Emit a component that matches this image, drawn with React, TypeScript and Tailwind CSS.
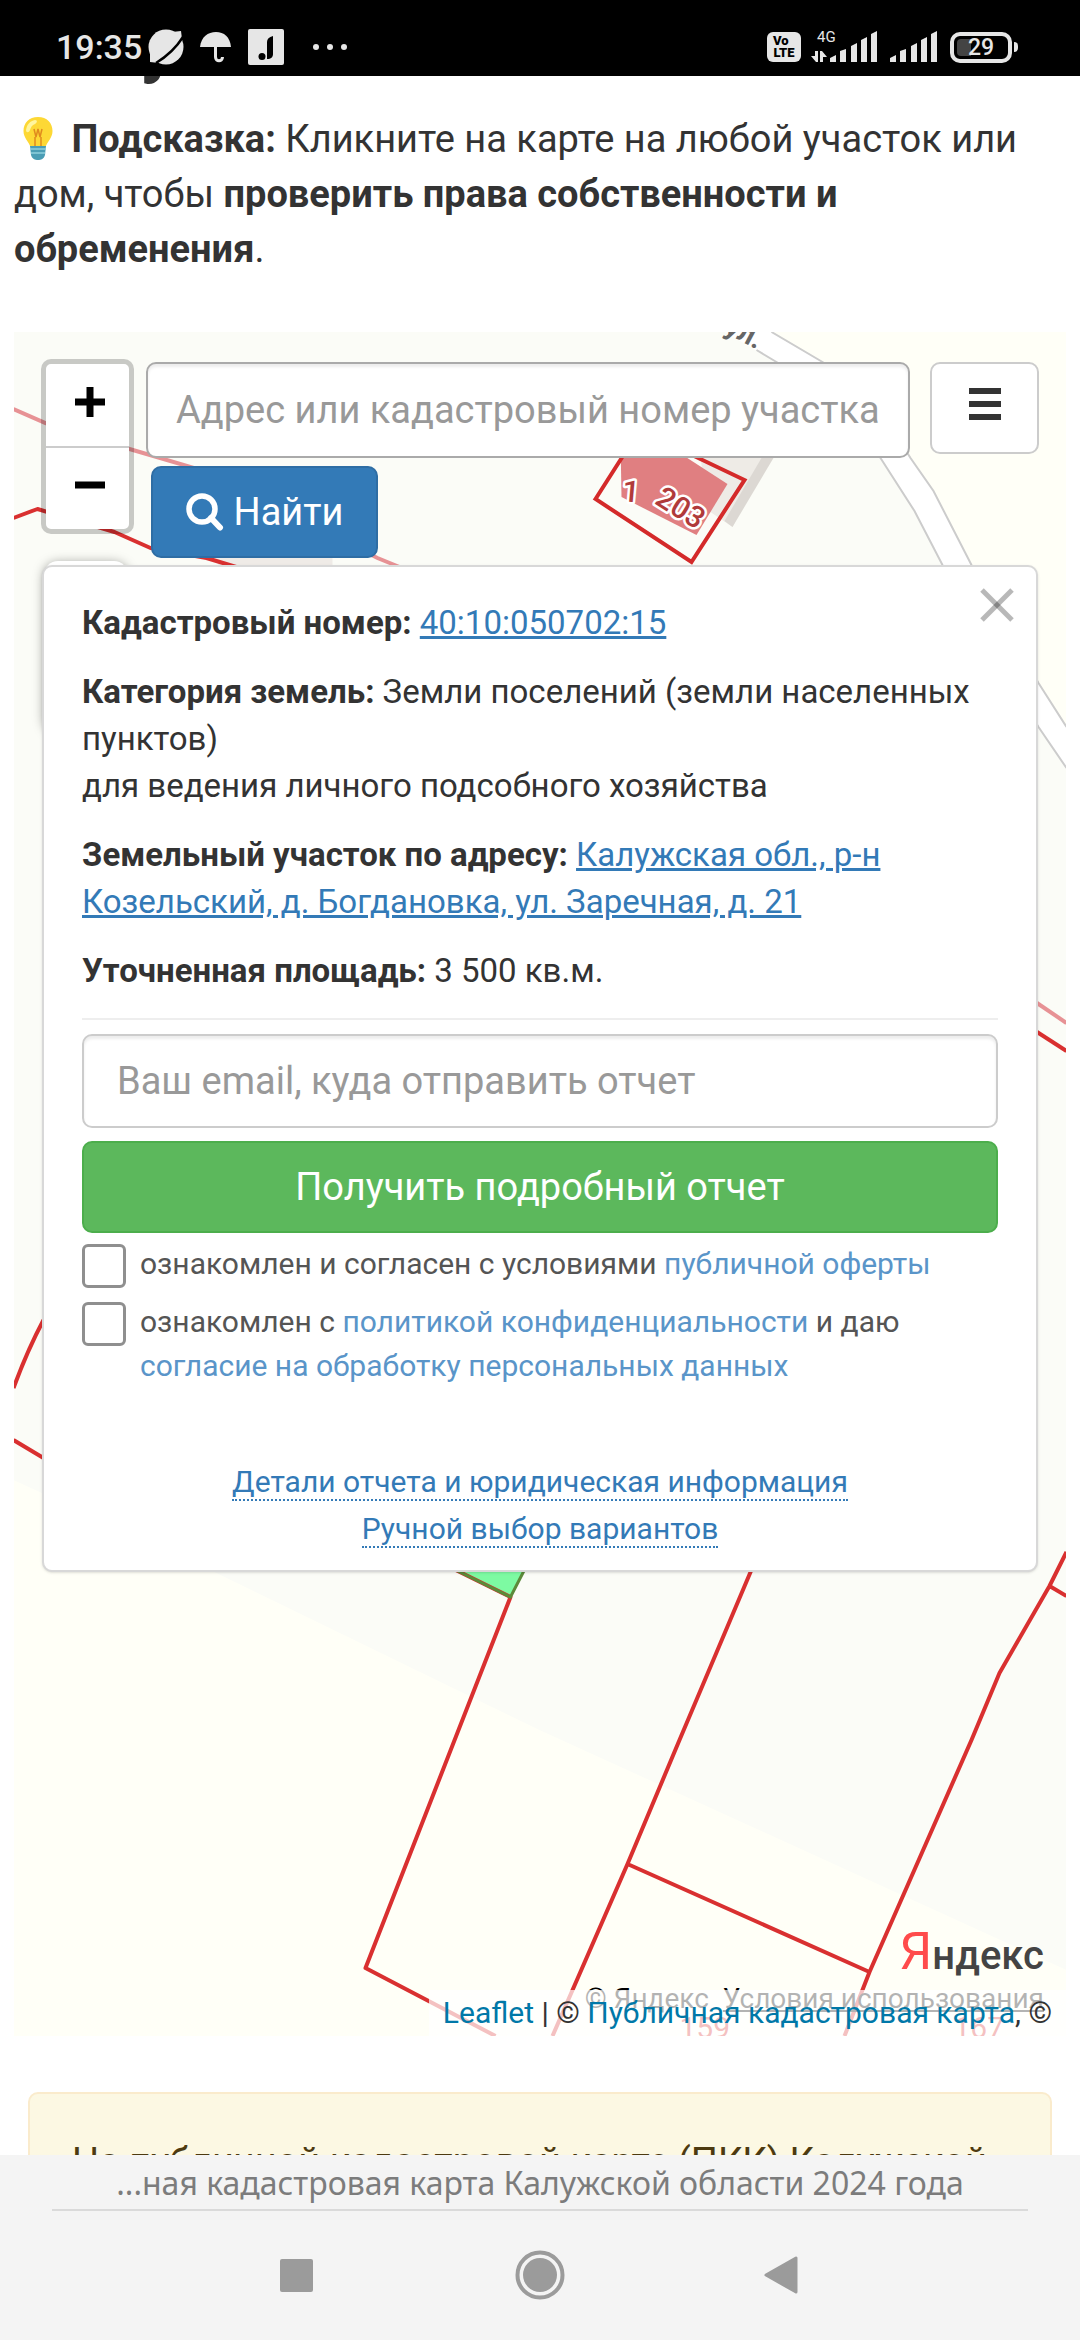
import { useState } from "react";

function StatusBar() {
  return (
    <header className="relative z-10 flex h-[76px] shrink-0 items-center justify-between bg-black pt-[18px] pr-[62px] pl-14 text-[#e6e6e6]">
      <div className="flex items-center">
        <span className="text-[34px] leading-[42px] font-medium">19:35</span>
        <svg className="ml-1.5 h-9 w-9" viewBox="0 0 36 36" fill="currentColor">
          <circle cx="18" cy="18" r="17.500" />
          <path d="M24 3 33 2 34 10ZM2 24v9l9 1Z" />
          <path d="M8 34C18 28 28 19 35 8" fill="none" stroke="#000" strokeWidth="2.500" />
        </svg>
        <svg className="ml-4 h-8 w-8" viewBox="0 0 32 32" fill="currentColor">
          <path d="M0 16C1 6 8 1 16 1s14 5 15 15Z" />
          <path d="M15.500 15v11c0 5 7 5 7 0" fill="none" stroke="currentColor" strokeWidth="3" />
        </svg>
        <svg className="ml-4 h-9 w-9" viewBox="0 0 36 36">
          <rect width="36" height="36" rx="2" fill="currentColor" />
          <circle cx="14" cy="27.500" r="3.500" fill="#000" />
          <path d="M19 30V13c0-3 2-5 6-6v18c0 3-2 5-6 5Z" fill="#000" />
        </svg>
        <svg className="ml-7 h-2 w-9" viewBox="0 0 36 8" fill="currentColor">
          <circle cx="4" cy="4" r="3" />
          <circle cx="18" cy="4" r="3" />
          <circle cx="32" cy="4" r="3" />
        </svg>
      </div>

      <div className="flex items-center">
        <span className="flex h-[30px] w-[34px] flex-col items-center justify-center rounded-md bg-[#e6e6e6] text-[13px] leading-[12px] font-black text-black">
          <span className="self-start pl-1.5">Vo</span>
          <span>LTE</span>
        </span>
        <svg className="ml-2.5 h-[32px] w-[68px]" viewBox="0 0 68 32" fill="currentColor">
          <text x="6" y="11" fontSize="15">4G</text>
          <path d="M4 20h3v11H5l-5-6h4Zm5 11V20h2l5 6h-4v5Z" />
          <path d="M19 31v-4l6-3v7ZM29 31V20l6-2v13ZM40 31V15l6-3v19ZM50 31V9l6-3v25ZM60 31V3l6-3v31Z" />
        </svg>
        <svg className="ml-2.5 h-[32px] w-[49px]" viewBox="0 0 49 32" fill="currentColor">
          <path d="M1 31v-4l6-3v7ZM11 31V20l6-2v13ZM22 31V15l6-3v19ZM32 31V9l6-3v25ZM42 31V3l6-3v31Z" />
        </svg>
        <div className="relative ml-3 flex h-[31px] w-[62px] items-center justify-center rounded-[10px] border-4 border-[#e6e6e6] text-[23px] leading-none font-medium">
          <span className="absolute top-[3px] left-[3px] h-[17px] w-[14px] rounded-l bg-[#444]" />
          <span className="relative">29</span>
        </div>
        <span className="ml-0.5 h-2.5 w-1 rounded-r bg-[#e6e6e6]" />
      </div>
    </header>
  );
}

function Bulb() {
  return (
    <svg className="inline-block h-[44px] w-[48px] align-[-9px]" viewBox="0 0 48 44">
      <path d="M24 0C15 0 9.500 6 9.500 14c0 7 5 10 7 16h15c2-6 7-9 7-16C38.500 6 33 0 24 0Z" fill="#fdd835" />
      <path d="M12 13c1-6 4-9 9-10 3 0 2 3 0 4-3 1-4 3-5 6-1 3-4 3-4 0Z" fill="#fff59d" />
      <path d="M20 12l2 8 2-8 2 8 2-8M21 20v9m6-9v9" fill="none" stroke="#e08a1e" strokeWidth="1.500" />
      <path d="M16 29h16l-1 9c-1 4-4 5-7 5s-6-1-7-5Z" fill="#4a9db5" />
      <path d="M16 32h16M17 36h14" stroke="#8fd0dd" strokeWidth="1.500" />
    </svg>
  );
}

function MapCanvas() {
  return (
    <svg
      className="absolute inset-0 h-full w-full"
      viewBox="14 332 1053 1704"
      preserveAspectRatio="xMidYMid slice"
      fill="none"
    >
      <rect x="14" y="332" width="1053" height="1704" fill="#fffff7" />
      <path d="M14 332H772L911 458 972 565 1067 730V1970L540 1730 217 1573 14 1480Z" fill="#fbfcf7" />

      {/* road */}
      <path d="M725 332 777 362 881 458 915 511 943 565 1039 727 1067 768V727L1039 683 972 565 934 491 911 458 823 362 772 332Z" fill="#fff" />
      <path d="M757 350 777 362Q840 400 881 458L915 511 943 565 1039 727 1067 768M772 332 823 362Q880 405 911 458L934 491 972 565 1039 683 1067 727" stroke="#ccc" strokeWidth="2" />
      <text transform="translate(724 332) rotate(28)" fontSize="28" fontWeight="700" fill="#666">ул.</text>

      {/* building 203 */}
      <path d="M700 450H774L733 527 708 510Z" fill="#eeebe6" />
      <path d="M774 458 733 527 725 521 762 458Z" fill="#dcd8d3" />
      <path d="M621 440H660L728 484 697 535 622 497Z" fill="#e07f81" />
      <path d="M596 499 640 430 745 480 692 562Z" stroke="#d42a2a" strokeWidth="4" />
      <g fontSize="30" fontWeight="500" fill="#b03a3a" stroke="#fff" strokeWidth="5" paintOrder="stroke" strokeLinejoin="round">
        <text transform="translate(622 501) rotate(5)">1</text>
        <text transform="translate(654 503) rotate(32)">203</text>
      </g>
      <path d="M207 550H333V566H220Z" fill="#efebe7" />

      {/* parcel borders */}
      <g stroke="#e79295" strokeWidth="4">
        <path d="M14 409 46 423 130 449 205 471 378 558 400 567" />
        <path d="M1036 1002 1067 1023" />
      </g>
      <path d="M440 1562 511 1597 529 1562Z" fill="#7dfaa2" />
      <g stroke="#d93030" strokeWidth="4" strokeLinejoin="round">
        <path d="M14 518 38 509 115 532 151 548 207 558 240 568" />
        <path d="M1036 1031 1067 1051" />
        <path d="M44 1320Q28 1350 14 1388M14 1440 44 1458" />
        <path d="M440 1562 511 1597 366 1968 496 2036" />
        <path d="M754 1565 680 1740 628 1864 553 2036M628 1864 870 1972" />
        <path d="M1067 1552 1050 1586 1000 1673 972 1740 870 1972 845 2036M1050 1586 1067 1596" />
      </g>
      <path d="M440 1562 511 1597 529 1562" stroke="#5c8a3a" strokeWidth="3" />
      <g fontSize="30" fill="#d93030">
        <text x="680" y="2038">159</text>
        <text x="954" y="2038">167</text>
      </g>
    </svg>
  );
}

function ZoomControl() {
  return (
    <div className="flex h-[175px] w-[93px] shrink-0 flex-col overflow-hidden rounded-[10px] border-[5px] border-black/20 bg-white bg-clip-padding">
      <button type="button" aria-label="Приблизить" className="flex flex-1 items-center justify-center border-b-2 border-[#ccc] pl-1">
        <svg className="mb-1.5 h-[30px] w-[30px]" viewBox="0 0 30 30" stroke="#000" strokeWidth="7">
          <path d="M15 0v30M0 15h30" />
        </svg>
      </button>
      <button type="button" aria-label="Отдалить" className="flex flex-1 items-center justify-center pl-1">
        <svg className="mb-1.5 h-[30px] w-[30px]" viewBox="0 0 30 30" stroke="#000" strokeWidth="7">
          <path d="M0 15h30" />
        </svg>
      </button>
    </div>
  );
}

function ParcelCard({ onClose }: { onClose: () => void }) {
  const [email, setEmail] = useState("");

  return (
    <section className="relative mx-7 mt-[7px] rounded-[10px] border-2 border-[#d8d8d8] bg-white px-[38px] pt-8 pb-[18px] shadow-sm">
      <button type="button" aria-label="Закрыть" onClick={onClose} className="absolute top-[21px] right-[22px]">
        <svg className="h-[34px] w-[34px]" viewBox="0 0 34 34" stroke="#000" strokeOpacity="0.280" strokeWidth="5">
          <path d="M2 2 32 32" />
          <path d="M32 2 2 32" />
        </svg>
      </button>

      <div className="space-y-[22px] text-[33px] leading-[47px]">
        <p>
          <b>Кадастровый номер:</b>{" "}
          <a href="#parcel" className="text-[#337ab7] underline">40:10:050702:15</a>
        </p>
        <p>
          <b>Категория земель:</b> Земли поселений (земли населенных пунктов)
          <br />
          для ведения личного подсобного хозяйства
        </p>
        <p>
          <b>Земельный участок по адресу:</b>{" "}
          <a href="#address" className="text-[#337ab7] underline">
            Калужская обл., р-н Козельский, д. Богдановка, ул. Заречная, д. 21
          </a>
        </p>
        <p>
          <b>Уточненная площадь:</b> 3 500 кв.м.
        </p>
      </div>

      <hr className="mt-6 mb-3.5 border-t-2 border-[#eee]" />

      <form onSubmit={(e) => e.preventDefault()}>
        <input
          type="email"
          aria-label="Ваш email"
          placeholder="Ваш email, куда отправить отчет"
          value={email}
          onChange={(e) => setEmail(e.target.value)}
          className="block h-[94px] w-full rounded-[10px] border-2 border-[#ccc] px-[33px] text-[38px] shadow-[inset_0_3px_3px_rgba(0,0,0,0.075)] placeholder:text-[#999] focus:outline-none"
        />
        <button
          type="submit"
          className="mt-[13px] h-[92px] w-full rounded-[10px] border-2 border-[#4cae4c] bg-[#5cb85c] text-[38px] text-white"
        >
          Получить подробный отчет
        </button>

        <div className="mt-[9px] space-y-3 text-[30px] leading-[44px] text-[#555]">
          <div className="flex gap-3.5">
            <input
              id="offer"
              type="checkbox"
              className="mt-0.5 h-11 w-11 shrink-0 appearance-none rounded-md border-3 border-[#8f8f8f] bg-white checked:bg-[#337ab7]"
            />
            <label htmlFor="offer">
              ознакомлен и согласен с условиями{" "}
              <a href="#offer" className="text-[#5a95c9]">публичной оферты</a>
            </label>
          </div>
          <div className="flex gap-3.5">
            <input
              id="privacy"
              type="checkbox"
              className="mt-0.5 h-11 w-11 shrink-0 appearance-none rounded-md border-3 border-[#8f8f8f] bg-white checked:bg-[#337ab7]"
            />
            <label htmlFor="privacy">
              ознакомлен с <a href="#privacy" className="text-[#5a95c9]">политикой конфиденциальности</a> и даю
              <br />
              <a href="#consent" className="text-[#5a95c9]">согласие на обработку персональных данных</a>
            </label>
          </div>
        </div>
      </form>

      <div className="mt-[70px] flex flex-col items-center text-[30px] leading-[47px] text-[#337ab7]">
        <p>
          <a href="#details" className="border-b-2 border-dotted border-[#337ab7]">
            Детали отчета и юридическая информация
          </a>
        </p>
        <p>
          <a href="#manual" className="border-b-2 border-dotted border-[#337ab7]">
            Ручной выбор вариантов
          </a>
        </p>
      </div>
    </section>
  );
}

function CadastreMap() {
  const [query, setQuery] = useState("");
  const [open, setOpen] = useState(true);

  return (
    <div className="relative mx-3.5 mt-[55px] flex min-h-[1704px] flex-col overflow-hidden">
      <MapCanvas />

      <div className="relative flex px-[27px] pt-[27px]">
        <ZoomControl />
        <form className="ml-3 min-w-0 flex-1 pt-[3px]" onSubmit={(e) => e.preventDefault()}>
          <input
            type="text"
            aria-label="Адрес или кадастровый номер участка"
            placeholder="Адрес или кадастровый номер участка"
            value={query}
            onChange={(e) => setQuery(e.target.value)}
            className="block h-24 w-full rounded-[10px] border-2 border-[#aaa] bg-white px-7 text-[38px] shadow-[inset_0_3px_3px_rgba(0,0,0,0.075)] placeholder:text-[#999] focus:outline-none"
          />
          <button
            type="submit"
            className="mt-2 ml-[5px] flex h-[92px] w-[227px] items-center justify-center gap-2.5 rounded-[10px] border-2 border-[#2e6da4] bg-[#337ab7] text-[38px] text-white"
          >
            <svg className="h-[38px] w-[38px]" viewBox="0 0 38 38" fill="none" stroke="currentColor">
              <circle cx="16" cy="16" r="13" strokeWidth="5.500" />
              <path d="M25 25 34 34.500" strokeWidth="6" strokeLinecap="round" />
            </svg>
            Найти
          </button>
        </form>
        <button
          type="button"
          aria-label="Меню"
          className="mt-[3px] ml-5 flex h-[92px] w-[109px] shrink-0 items-center justify-center rounded-[10px] border-2 border-[#ccc] bg-white"
        >
          <svg className="mb-2 h-8 w-8" viewBox="0 0 32 32" fill="#333">
            <path d="M0 0h32v6H0ZM0 13h32v6H0ZM0 26h32v6H0Z" />
          </svg>
        </button>
      </div>

      {/* layers control, mostly hidden by the card */}
      <div className="absolute top-[229px] left-[30px] h-[170px] w-[84px] rounded-[14px] bg-white shadow-[0_2px_12px_rgba(0,0,0,0.4)]" />

      {open && <ParcelCard onClose={() => setOpen(false)} />}

      <div className="absolute right-[22px] bottom-[50px] text-[40px] leading-[60px] font-medium text-[#444]">
        <span className="text-[52px] font-normal text-[#ff4b4b]">Я</span>ндекс
      </div>
      <div className="absolute right-[22px] bottom-[21px] text-[28px] leading-[32px] text-black">
        © Яндекс &nbsp;
        <a href="#terms" className="underline">Условия использования</a>
      </div>
      <div className="relative mt-auto self-end bg-white/70 px-3.5 py-2 text-[30px] leading-[30px] whitespace-nowrap">
        <a href="#leaflet" className="text-[#0078a8]">Leaflet</a> | ©{" "}
        <a href="#pkk" className="text-[#0078a8]">Публичная кадастровая карта</a>, ©
      </div>
    </div>
  );
}

function BottomBar() {
  return (
    <footer className="shrink-0 bg-[#f4f4f4] px-[52px] pb-10">
      <p className="h-[56px] overflow-hidden border-b-2 border-[#dadada] text-center font-['Noto_Sans',sans-serif] text-[32px] leading-[56px] whitespace-nowrap text-[#7c7c7c]">
        ...ная кадастровая карта Калужской области 2024 года
      </p>
      <nav className="mt-[39px] flex items-center justify-center">
        <button type="button" aria-label="Недавние">
          <svg className="h-[50px] w-[50px]" viewBox="0 0 50 50">
            <rect x="9" y="9" width="33" height="33" rx="2" fill="#9b9b9b" />
          </svg>
        </button>
        <button type="button" aria-label="Домой" className="mx-[194px]">
          <svg className="h-[50px] w-[50px]" viewBox="0 0 50 50" fill="none">
            <circle cx="25" cy="25" r="22.500" stroke="#9b9b9b" strokeWidth="4" />
            <circle cx="25" cy="25" r="17" fill="#9b9b9b" />
          </svg>
        </button>
        <button type="button" aria-label="Назад">
          <svg className="h-[50px] w-[50px]" viewBox="0 0 50 50">
            <path d="M7 25 37 8v34Z" fill="#9b9b9b" stroke="#9b9b9b" strokeWidth="3" strokeLinejoin="round" />
          </svg>
        </button>
      </nav>
    </footer>
  );
}

export default function App() {
  return (
    <div className="flex h-screen flex-col overflow-hidden bg-white font-['Roboto',sans-serif] text-[#333]">
      <StatusBar />

      <main className="min-h-0 flex-1 overflow-hidden">
        {/* heading is scrolled under the status bar */}
        <div className="flex h-2 items-end overflow-hidden px-3.5">
          <h1 className="text-[72px] leading-[80px] font-bold">Калужской области</h1>
        </div>

        <p className="mt-7 px-3.5 text-[38px] leading-[55px]">
          <Bulb /> <b>Подсказка:</b> Кликните на карте на любой участок или дом, чтобы{" "}
          <b>проверить права собственности и обременения</b>.
        </p>

        <CadastreMap />

        <div className="mx-7 mt-14 rounded-[10px] border-2 border-[#faebcc] bg-[#fcf8e3] px-[42px] py-[41px] text-[38px] leading-[55px] text-[#4d3a10]">
          На публичной кадастровой карте (ПКК) Калужской области
        </div>
      </main>

      <BottomBar />
    </div>
  );
}
